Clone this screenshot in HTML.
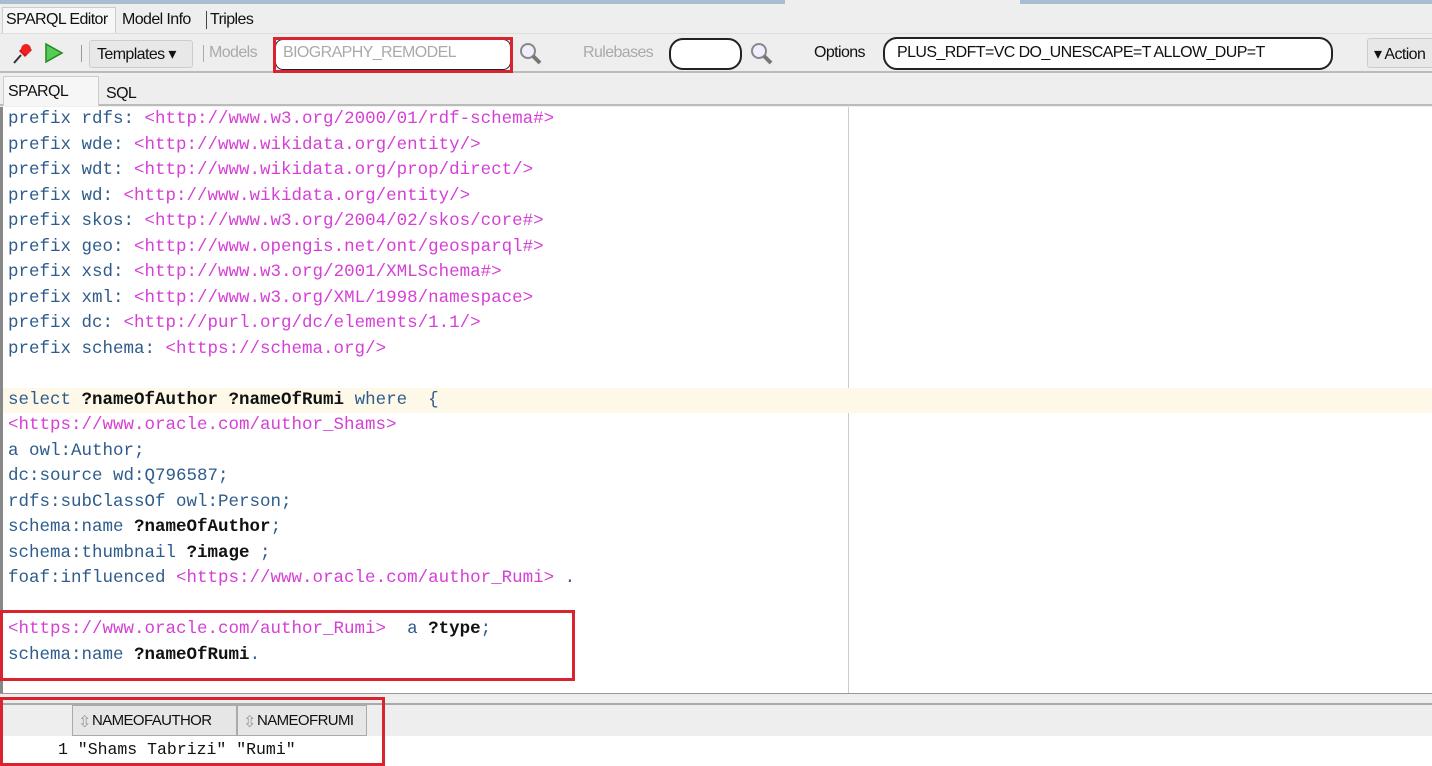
<!DOCTYPE html>
<html><head><meta charset="utf-8"><style>
*{margin:0;padding:0;box-sizing:border-box}
body{width:1432px;height:766px;overflow:hidden;background:#f0f0f0;font-family:"Liberation Sans",sans-serif;position:relative}
.a{position:absolute}
.ui{font-size:16px;color:#111;letter-spacing:-0.6px}
.code{position:absolute;left:8px;top:107px;font-family:"Liberation Mono",monospace;font-size:17.5px;line-height:25.5px;white-space:pre;color:#2e5c8c}
.m{color:#d63fd6}.v{color:#111;font-weight:bold}
.red{position:absolute;border:3px solid #d9232e}
</style></head><body>
<div class="a" style="left:0;top:0;width:1432px;height:4px;background:#a8bcd3"></div>
<div class="a" style="left:785px;top:0;width:235px;height:4px;background:#eee"></div>
<div class="a" style="left:0;top:4px;width:1432px;height:29px;background:#eeeeee"></div>
<div class="a" style="left:2px;top:7px;width:114px;height:27px;background:#f6f6f6;border:1px solid #ccc;border-bottom:none"></div>
<div class="a ui" style="left:6px;top:11px">SPARQL Editor</div>
<div class="a ui" style="left:122px;top:11px">Model Info</div>
<div class="a" style="left:206px;top:11px;width:1px;height:18px;background:#444"></div>
<div class="a ui" style="left:210px;top:11px">Triples</div>
<div class="a" style="left:0;top:33px;width:1432px;height:40px;background:#eeeeee;border-top:1px solid #ddd;border-bottom:2px solid #bbb"></div>
<svg class="a" style="left:10px;top:41px" width="24" height="24" viewBox="0 0 24 24"><path d="M4 22 L11 14" stroke="#333" stroke-width="2"/><path d="M9 10 L16 3 L22 9 L15 16 Z" fill="#d11"/><circle cx="16" cy="8" r="5" fill="#e22"/></svg>
<svg class="a" style="left:43px;top:42px" width="22" height="22"><path d="M3 2 L19 11 L3 20 Z" fill="#5c5" stroke="#282" stroke-width="1.5"/></svg>
<div class="a" style="left:81px;top:45px;width:1px;height:17px;background:#999"></div>
<div class="a" style="left:89px;top:40px;width:104px;height:28px;border:1px solid #ccc;border-radius:3px;background:#e8e8e8"></div>
<div class="a ui" style="left:97px;top:44px">Templates ▾</div>
<div class="a" style="left:203px;top:45px;width:1px;height:17px;background:#aaa"></div>
<div class="a ui" style="left:209px;top:44px;color:#aaa">Models</div>
<div class="a" style="left:275px;top:39px;width:236px;height:31px;background:#fff;border:1px solid #222;border-radius:8px"></div>
<div class="a ui" style="left:283px;top:44px;color:#aaa">BIOGRAPHY_REMODEL</div>
<div class="red" style="left:273px;top:37px;width:240px;height:36px"></div>
<svg class="a" style="left:518px;top:41px" width="26" height="26"><circle cx="10" cy="10" r="7" fill="#eef" stroke="#888" stroke-width="2"/><path d="M15 15 L22 22" stroke="#777" stroke-width="4"/></svg>
<div class="a ui" style="left:583px;top:44px;color:#aaa">Rulebases</div>
<div class="a" style="left:669px;top:38px;width:73px;height:32px;background:#fff;border:2px solid #222;border-radius:14px"></div>
<svg class="a" style="left:749px;top:41px" width="26" height="26"><circle cx="10" cy="10" r="7" fill="#eef" stroke="#888" stroke-width="2"/><path d="M15 15 L22 22" stroke="#777" stroke-width="4"/></svg>
<div class="a ui" style="left:814px;top:44px">Options</div>
<div class="a" style="left:883px;top:37px;width:450px;height:33px;background:#fff;border:2px solid #222;border-radius:14px"></div>
<div class="a ui" style="left:897px;top:44px">PLUS_RDFT=VC DO_UNESCAPE=T ALLOW_DUP=T</div>
<div class="a" style="left:1367px;top:38px;width:70px;height:30px;border:1px solid #ccc;border-radius:3px;background:#e8e8e8"></div>
<div class="a ui" style="left:1374px;top:44px">▾ Action</div>
<div class="a" style="left:0;top:75px;width:1432px;height:31px;background:#eeeeee;border-bottom:2px solid #bbb"></div>
<div class="a" style="left:3px;top:76px;width:96px;height:30px;background:#f6f6f6;border:1px solid #ccc;border-bottom:none"></div>
<div class="a ui" style="left:8px;top:83px">SPARQL</div>
<div class="a ui" style="left:106px;top:85px">SQL</div>
<div class="a" style="left:0;top:107px;width:1432px;height:586px;background:#fff;border-left:3px solid #888"></div>
<div class="a" style="left:848px;top:107px;width:1px;height:586px;background:#ccc"></div>
<div class="a" style="left:3px;top:388px;width:1429px;height:25px;background:#fdf8e8"></div>
<div class="code">prefix rdfs: <span class="m">&lt;http://www.w3.org/2000/01/rdf-schema#&gt;</span>
prefix wde: <span class="m">&lt;http://www.wikidata.org/entity/&gt;</span>
prefix wdt: <span class="m">&lt;http://www.wikidata.org/prop/direct/&gt;</span>
prefix wd: <span class="m">&lt;http://www.wikidata.org/entity/&gt;</span>
prefix skos: <span class="m">&lt;http://www.w3.org/2004/02/skos/core#&gt;</span>
prefix geo: <span class="m">&lt;http://www.opengis.net/ont/geosparql#&gt;</span>
prefix xsd: <span class="m">&lt;http://www.w3.org/2001/XMLSchema#&gt;</span>
prefix xml: <span class="m">&lt;http://www.w3.org/XML/1998/namespace&gt;</span>
prefix dc: <span class="m">&lt;http://purl.org/dc/elements/1.1/&gt;</span>
prefix schema: <span class="m">&lt;https://schema.org/&gt;</span>

select <span class="v">?nameOfAuthor ?nameOfRumi</span> where  {
<span class="m">&lt;https://www.oracle.com/author_Shams&gt;</span>
a owl:Author;
dc:source wd:Q796587;
rdfs:subClassOf owl:Person;
schema:name <span class="v">?nameOfAuthor</span>;
schema:thumbnail <span class="v">?image</span> ;
foaf:influenced <span class="m">&lt;https://www.oracle.com/author_Rumi&gt;</span> .

<span class="m">&lt;https://www.oracle.com/author_Rumi&gt;</span>  a <span class="v">?type</span>;
schema:name <span class="v">?nameOfRumi</span>.</div>
<div class="red" style="left:0;top:610px;width:575px;height:71px"></div>
<div class="a" style="left:0;top:693px;width:1432px;height:12px;background:#eee;border-top:1px solid #999;border-bottom:2px solid #aaa"></div>
<div class="a" style="left:0;top:705px;width:1432px;height:61px;background:#fff"></div>
<div class="a" style="left:0;top:705px;width:1432px;height:31px;background:#eeeeee"></div>
<div class="a" style="left:72px;top:705px;width:165px;height:31px;background:#e6e6e6;border:1px solid #aaa"></div>
<div class="a" style="left:237px;top:705px;width:130px;height:31px;background:#e6e6e6;border:1px solid #aaa"></div>
<div class="a ui" style="left:78px;top:712px;color:#999">⇳</div>
<div class="a ui" style="left:92px;top:712px;font-size:15px">NAMEOFAUTHOR</div>
<div class="a ui" style="left:243px;top:712px;color:#999">⇳</div>
<div class="a ui" style="left:257px;top:712px;font-size:15px">NAMEOFRUMI</div>
<div class="a" style="left:58px;top:740px;font-family:'Liberation Mono',monospace;font-size:16.5px;white-space:pre;color:#111">1 "Shams Tabrizi" "Rumi"</div>
<div class="red" style="left:0;top:697px;width:385px;height:69px"></div>
</body></html>
